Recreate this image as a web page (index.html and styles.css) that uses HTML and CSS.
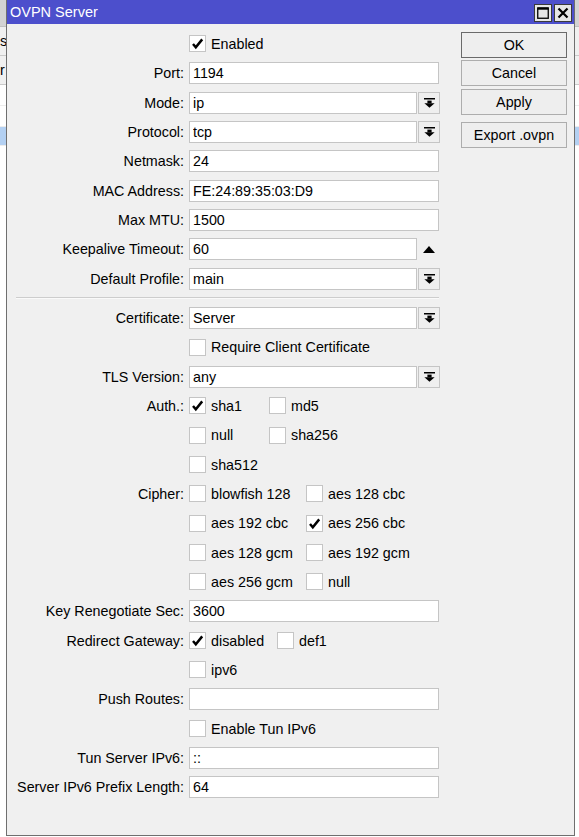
FILE: index.html
```html
<!DOCTYPE html>
<html lang="en">
<head>
  <meta charset="UTF-8" />
  <title>OVPN Server</title>
  <link rel="stylesheet" href="styles.css">
</head>
<body>

<div class="desk">
  <div class="bg-head"></div>
  <div class="bg-tool">s</div>
  <div class="bg-tool">r</div>
  <div class="bg-row"></div>
  <div class="bg-row"></div>
  <div class="bg-row bg-sel"></div>
</div>

<div class="win">
  <div class="titlebar">
    <span class="title">OVPN Server</span>
    <div class="tb-btns">
      <span class="tb-btn">
        <svg width="12" height="12" viewBox="0 0 12 12"><rect x="0.75" y="1" width="10.5" height="10.25" fill="none" stroke="#000" stroke-width="1.3"/><rect x="0.5" y="0.5" width="11" height="2.2" fill="#000"/></svg>
      </span>
      <span class="tb-btn">
        <svg width="12" height="12" viewBox="0 0 12 12"><path d="M1.5 1.5 L10.5 10.5 M10.5 1.5 L1.5 10.5" stroke="#000" stroke-width="2.2"/></svg>
      </span>
    </div>
  </div>

  <div class="win-body">
    <div class="form">
      <div class="row">
        <span class="label"></span>
        <div class="checks"><span class="check"><span class="box on"></span>Enabled</span></div>
      </div>
      <div class="row"><span class="label">Port:</span><input class="input" value="1194" readonly></div>
      <div class="row">
        <span class="label">Mode:</span>
        <input class="input short" value="ip" readonly><span class="drop"></span>
      </div>
      <div class="row">
        <span class="label">Protocol:</span>
        <input class="input short" value="tcp" readonly><span class="drop"></span>
      </div>
      <div class="row"><span class="label">Netmask:</span><input class="input" value="24" readonly></div>
      <div class="row"><span class="label">MAC Address:</span><input class="input" value="FE:24:89:35:03:D9" readonly></div>
      <div class="row"><span class="label">Max MTU:</span><input class="input" value="1500" readonly></div>
      <div class="row">
        <span class="label">Keepalive Timeout:</span>
        <input class="input short" value="60" readonly><span class="spin"></span>
      </div>
      <div class="row">
        <span class="label">Default Profile:</span>
        <input class="input short" value="main" readonly><span class="drop"></span>
      </div>

      <div class="sep"><div class="sep-line"></div></div>

      <div class="row">
        <span class="label">Certificate:</span>
        <input class="input short" value="Server" readonly><span class="drop"></span>
      </div>
      <div class="row">
        <span class="label"></span>
        <div class="checks"><span class="check"><span class="box"></span>Require Client Certificate</span></div>
      </div>
      <div class="row">
        <span class="label">TLS Version:</span>
        <input class="input short" value="any" readonly><span class="drop"></span>
      </div>

      <div class="row">
        <span class="label">Auth.:</span>
        <div class="checks auth">
          <span class="check"><span class="box on"></span>sha1</span>
          <span class="check"><span class="box"></span>md5</span>
        </div>
      </div>
      <div class="row">
        <span class="label"></span>
        <div class="checks auth">
          <span class="check"><span class="box"></span>null</span>
          <span class="check"><span class="box"></span>sha256</span>
        </div>
      </div>
      <div class="row">
        <span class="label"></span>
        <div class="checks auth">
          <span class="check"><span class="box"></span>sha512</span>
        </div>
      </div>

      <div class="row">
        <span class="label">Cipher:</span>
        <div class="checks cipher">
          <span class="check"><span class="box"></span>blowfish 128</span>
          <span class="check"><span class="box"></span>aes 128 cbc</span>
        </div>
      </div>
      <div class="row">
        <span class="label"></span>
        <div class="checks cipher">
          <span class="check"><span class="box"></span>aes 192 cbc</span>
          <span class="check"><span class="box on"></span>aes 256 cbc</span>
        </div>
      </div>
      <div class="row">
        <span class="label"></span>
        <div class="checks cipher">
          <span class="check"><span class="box"></span>aes 128 gcm</span>
          <span class="check"><span class="box"></span>aes 192 gcm</span>
        </div>
      </div>
      <div class="row">
        <span class="label"></span>
        <div class="checks cipher">
          <span class="check"><span class="box"></span>aes 256 gcm</span>
          <span class="check"><span class="box"></span>null</span>
        </div>
      </div>

      <div class="row"><span class="label">Key Renegotiate Sec:</span><input class="input" value="3600" readonly></div>
      <div class="row">
        <span class="label">Redirect Gateway:</span>
        <div class="checks redirect">
          <span class="check"><span class="box on"></span>disabled</span>
          <span class="check"><span class="box"></span>def1</span>
        </div>
      </div>
      <div class="row">
        <span class="label"></span>
        <div class="checks"><span class="check"><span class="box"></span>ipv6</span></div>
      </div>
      <div class="row"><span class="label">Push Routes:</span><input class="input" value="" readonly></div>
      <div class="row">
        <span class="label"></span>
        <div class="checks"><span class="check"><span class="box"></span>Enable Tun IPv6</span></div>
      </div>
      <div class="row"><span class="label">Tun Server IPv6:</span><input class="input" value="::" readonly></div>
      <div class="row"><span class="label">Server IPv6 Prefix Length:</span><input class="input" value="64" readonly></div>
    </div>

    <div class="actions">
      <button class="btn btn-default">OK</button>
      <button class="btn btn-cancel">Cancel</button>
      <button class="btn btn-apply">Apply</button>
      <button class="btn">Export .ovpn</button>
    </div>
  </div>
</div>

</body>
</html>
```

FILE: styles.css
```css
body {
  margin: 0;
  width: 579px;
  height: 837px;
  overflow: hidden;
  position: relative;
  font-family: 'Liberation Sans', Arial, sans-serif;
  font-size: 14.3px;
  color: #000;
  background-color: white;
}

/* app window behind the dialog */
.desk {
  height: 100%;
}
.bg-head {
  height: 26px;
  background: #d3d3d3;
  border-bottom: 1px solid #c0c0c0;
}
.bg-tool {
  height: 28px;
  line-height: 28px;
  background: #f0f0f0;
  border-bottom: 1px solid #cacaca;
  padding-left: 0;
}
.bg-row {
  height: 20px;
  border-bottom: 1px solid #ededed;
}
.bg-sel {
  height: 18px;
  background: #b3d0f2;
}

/* dialog */
.win {
  position: absolute;
  left: 6px;
  top: 0;
  width: 569px;
  height: 836px;
  box-sizing: border-box;
  border: 1px solid #6f6f6f;
  border-top: none;
  background: #f0f0f0;
}
.titlebar {
  height: 24px;
  background: #4c4fcc;
  color: white;
  display: flex;
  align-items: center;
  justify-content: space-between;
  padding: 0 2px 0 3px;
  font-size: 14.5px;
}
.tb-btns {
  display: flex;
  gap: 2px;
  padding-top: 2px;
}
.tb-btn {
  width: 18px;
  height: 18px;
  box-sizing: border-box;
  border: 1px solid #3a3a3a;
  background: #e6e6e6;
  display: flex;
  align-items: center;
  justify-content: center;
}

.win-body {
  display: flex;
}
.form {
  width: 433px;
  padding-top: 5.3px;
}
.row {
  display: flex;
  align-items: center;
  height: 29.33px;
}
.label {
  flex: none;
  width: 177px;
  margin-right: 5px;
  text-align: right;
  white-space: nowrap;
}
.input {
  width: 250px;
  height: 22px;
  box-sizing: border-box;
  margin: 0;
  padding: 0 3px;
  border: 1px solid #c5c5c5;
  background: white;
  font: inherit;
  color: inherit;
  outline: none;
}
.input.short {
  width: 228px;
}
.drop {
  width: 22px;
  height: 22px;
  margin-left: 1px;
  box-sizing: border-box;
  border: 1px solid #c5c5c5;
  background: #efefef url("data:image/svg+xml;utf8,<svg xmlns='http://www.w3.org/2000/svg' width='11' height='10' viewBox='0 0 11 10'><rect x='0' y='0' width='11' height='1.5'/><rect x='3.4' y='2.6' width='4.2' height='2.8'/><polygon points='0.4,5.2 10.6,5.2 5.5,9.8'/></svg>") no-repeat center;
}
.spin {
  margin-left: 6px;
  width: 0;
  height: 0;
  border-left: 6.5px solid transparent;
  border-right: 6.5px solid transparent;
  border-bottom: 7px solid #000;
}

.checks {
  display: flex;
}
.check {
  display: flex;
  align-items: center;
  white-space: nowrap;
}
.box {
  width: 17px;
  height: 17px;
  box-sizing: border-box;
  border: 1px solid #c5c5c5;
  background: white;
  margin-right: 5px;
}
.box.on {
  background: white url("data:image/svg+xml;utf8,<svg xmlns='http://www.w3.org/2000/svg' width='15' height='15' viewBox='0 0 15 15'><path d='M3 8 L5.8 11.2 L12.2 3.4' fill='none' stroke='black' stroke-width='2.5'/></svg>") no-repeat center;
}
.auth .check {
  width: 80px;
}
.cipher .check {
  width: 117px;
}
.redirect .check:first-child {
  width: 88px;
}

.sep {
  height: 10px;
  display: flex;
  align-items: center;
}
.sep-line {
  margin-left: 9px;
  width: 423px;
  border-top: 1px solid #cdcdcd;
  border-bottom: 1px solid #fafafa;
}

.actions {
  display: flex;
  flex-direction: column;
  width: 106px;
  margin-left: 21px;
  padding-top: 8px;
}
.btn {
  height: 26px;
  box-sizing: border-box;
  margin: 0 0 2px 0;
  padding: 0;
  border: 1px solid #adadad;
  background: #eeeeee;
  font: inherit;
  color: inherit;
}
.btn-default {
  border-color: #6a6a6a;
}
.btn-cancel {
  margin-bottom: 3px;
}
.btn-apply {
  margin-bottom: 7px;
}
```
